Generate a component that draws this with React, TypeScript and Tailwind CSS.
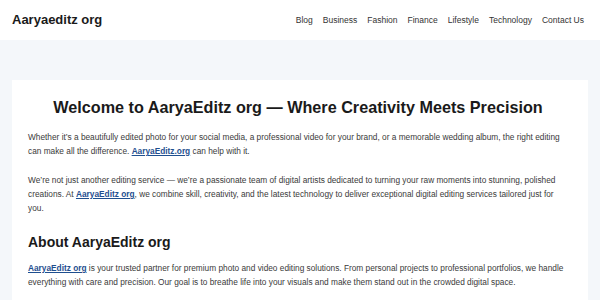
import React from "react";

const navItems = ["Blog", "Business", "Fashion", "Finance", "Lifestyle", "Technology", "Contact Us"];

const Link: React.FC<{ children: React.ReactNode }> = ({ children }) => (
  <a href="#" className="font-bold text-[#1f4f8f] underline underline-offset-1">
    {children}
  </a>
);

export default function App() {
  return (
    <div
      className="min-h-[300px] w-[600px] bg-[#f4f7fa] text-[#222]"
      style={{ fontFamily: '"Liberation Sans", Arial, sans-serif' }}
    >
      <header className="flex h-10 items-center justify-between bg-white pl-3 pr-4">
        <div className="text-[13px] font-bold text-[#1a1a1a]">Aaryaeditz org</div>
        <nav className="flex gap-[10px] text-[8.5px] text-[#333]">
          {navItems.map((item) => (
            <a key={item} href="#">
              {item}
            </a>
          ))}
        </nav>
      </header>

      <main className="mx-3 mt-10 bg-white pl-4 pr-5 pt-[16px] pb-6">
        <h1 className="mb-[12px] text-center text-[16.2px] font-bold leading-[22px] text-[#1a1a1a]">
          Welcome to AaryaEditz org — Where Creativity Meets Precision
        </h1>
        <div className="text-[8.3px] leading-[14px] text-[#3a3a3a]">
          <p className="mb-[15px]">
            Whether it’s a beautifully edited photo for your social media, a professional video for your brand, or a
            memorable wedding album, the right editing can make all the difference. <Link>AaryaEditz.org</Link> can
            help with it.
          </p>
          <p className="mb-[15px]">
            We’re not just another editing service — we’re a passionate team of digital artists dedicated to turning
            your raw moments into stunning, polished creations. At <Link>AaryaEditz org</Link>, we combine skill,
            creativity, and the latest technology to deliver exceptional digital editing services tailored just for
            you.
          </p>
        </div>
        <h2 className="mt-[18px] mb-[10px] text-[14px] font-bold leading-[18px] text-[#1a1a1a]">About AaryaEditz org</h2>
        <p className="text-[8.3px] leading-[14px] text-[#3a3a3a]">
          <Link>AaryaEditz org</Link> is your trusted partner for premium photo and video editing solutions. From
          personal projects to professional portfolios, we handle everything with care and precision. Our goal is to
          breathe life into your visuals and make them stand out in the crowded digital space.
        </p>
      </main>
    </div>
  );
}
